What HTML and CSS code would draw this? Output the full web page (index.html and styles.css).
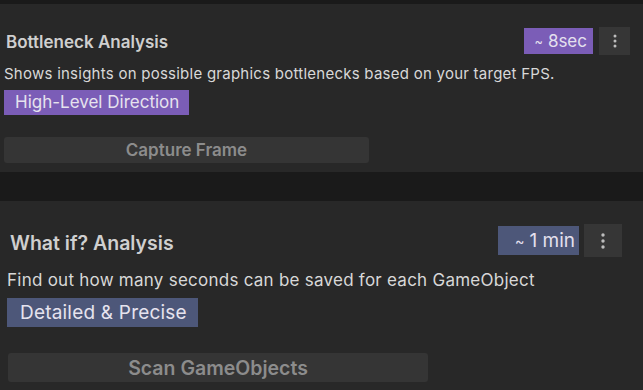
FILE: index.html
```html
<!DOCTYPE html>
<html lang="en">
<head>
  <meta charset="UTF-8">
  <meta name="viewport" content="width=device-width, initial-scale=1.0">
  <title>Analysis</title>
  <link rel="stylesheet" href="styles.css">
</head>
<body>
  <!-- Bottleneck -->
  <section class="panel panel-small">
    <div class="panel-head">
      <h2 class="panel-title">Bottleneck Analysis</h2>
      <div class="panel-tools">
        <span class="eta eta-purple"><span class="tilde">~</span> 8sec</span>
        <button class="kebab" type="button">
          <svg width="4" height="14" viewBox="0 0 4 14"><circle cx="2" cy="2" r="1.5"/><circle cx="2" cy="7" r="1.5"/><circle cx="2" cy="12" r="1.5"/></svg>
        </button>
      </div>
    </div>
    <p class="panel-desc">Shows insights on possible graphics bottlenecks based on your target FPS.</p>
    <div class="tag tag-purple">High-Level Direction</div>
    <button class="action" type="button">Capture Frame</button>
  </section>

  <!-- What if -->
  <section class="panel panel-large">
    <div class="panel-head">
      <h2 class="panel-title">What if? Analysis</h2>
      <div class="panel-tools">
        <span class="eta eta-blue"><span class="tilde">~</span> 1 min</span>
        <button class="kebab" type="button">
          <svg width="4" height="16" viewBox="0 0 4 16"><circle cx="2" cy="2" r="1.7"/><circle cx="2" cy="8" r="1.7"/><circle cx="2" cy="14" r="1.7"/></svg>
        </button>
      </div>
    </div>
    <p class="panel-desc">Find out how many seconds can be saved for each GameObject</p>
    <div class="tag tag-blue">Detailed &amp; Precise</div>
    <button class="action" type="button">Scan GameObjects</button>
  </section>
</body>
</html>
```

FILE: styles.css
```css
/* base */
html, body {
  margin: 0;
  padding: 0;
  height: 100%;
  overflow: hidden;
}
body {
  background-color: #1a1a1a;
  font-family: Inter, "Noto Sans", "Liberation Sans", sans-serif;
  color: #d4d4d4;
  padding-top: 4px;
}

/* panels */
.panel {
  background-color: #282828;
  display: flex;
  flex-direction: column;
  align-items: flex-start;
}
.panel-small {
  padding: 23px 13px 9px 4px;
}
.panel-large {
  margin-top: 29px;
  padding: 23px 21px 20px 7px;
}
.panel-head {
  align-self: stretch;
  display: flex;
  align-items: center;
  justify-content: space-between;
}
.panel-title {
  margin: 0;
  font-weight: 600;
  color: #cfcfcf;
}
.panel-tools {
  display: flex;
  align-items: center;
}
.panel-desc {
  margin: 0;
  color: #d8d8d8;
  white-space: nowrap;
}

/* time badge + menu */
.eta {
  display: flex;
  align-items: center;
  justify-content: flex-end;
  box-sizing: border-box;
  color: #e4e0ee;
}
.eta .tilde {
  font-size: 0.75em;
  margin-right: 5px;
}
.eta-purple {
  background-color: #7b5db7;
}
.eta-blue {
  background-color: #4d5779;
}
.kebab {
  border: none;
  padding: 0;
  background-color: #363636;
  display: flex;
  align-items: center;
  justify-content: center;
}
.kebab svg {
  fill: #bdbdbd;
}

/* tags */
.tag {
  box-sizing: border-box;
  color: #e6e3ee;
  white-space: nowrap;
}
.tag-purple {
  background-color: #7b5db7;
}
.tag-blue {
  background-color: #4d5779;
}

/* action button */
.action {
  border: none;
  border-radius: 3px;
  background-color: #353535;
  color: #8c8c8c;
  font-family: inherit;
  font-weight: 600;
  padding: 0;
}

/* small panel sizes */
.panel-small .panel-head {
  height: 28px;
}
.panel-small .panel-title {
  font-size: 17px;
  padding: 2px 0 0 2px;
}
.panel-small .eta {
  width: 69px;
  height: 26px;
  font-size: 17px;
  padding-right: 6px;
}
.panel-small .kebab {
  width: 31px;
  height: 28px;
  margin-left: 6px;
}
.panel-small .panel-desc {
  margin-top: 9px;
  font-size: 15px;
  letter-spacing: 0.25px;
  line-height: 20px;
}
.panel-small .tag {
  margin-top: 6px;
  width: 185px;
  height: 25px;
  line-height: 25px;
  font-size: 17px;
  padding-left: 11px;
}
.panel-small .action {
  margin-top: 22px;
  width: 365px;
  height: 26px;
  font-size: 17px;
}

/* large panel sizes */
.panel-large .panel-head {
  height: 33px;
}
.panel-large .panel-title {
  font-size: 19.5px;
  padding: 4px 0 0 3px;
}
.panel-large .eta {
  width: 81px;
  height: 29px;
  font-size: 19px;
  padding-right: 4px;
}
.panel-large .kebab {
  width: 38px;
  height: 33px;
  margin-left: 5px;
}
.panel-large .panel-desc {
  margin-top: 12px;
  font-size: 17px;
  letter-spacing: 0.25px;
  line-height: 22px;
}
.panel-large .tag {
  margin-top: 7px;
  width: 191px;
  height: 29px;
  line-height: 29px;
  font-size: 19px;
  letter-spacing: 0.2px;
  padding-left: 13px;
}
.panel-large .action {
  margin-top: 26px;
  margin-left: 1px;
  width: 420px;
  height: 29px;
  font-size: 19.5px;
}
```
